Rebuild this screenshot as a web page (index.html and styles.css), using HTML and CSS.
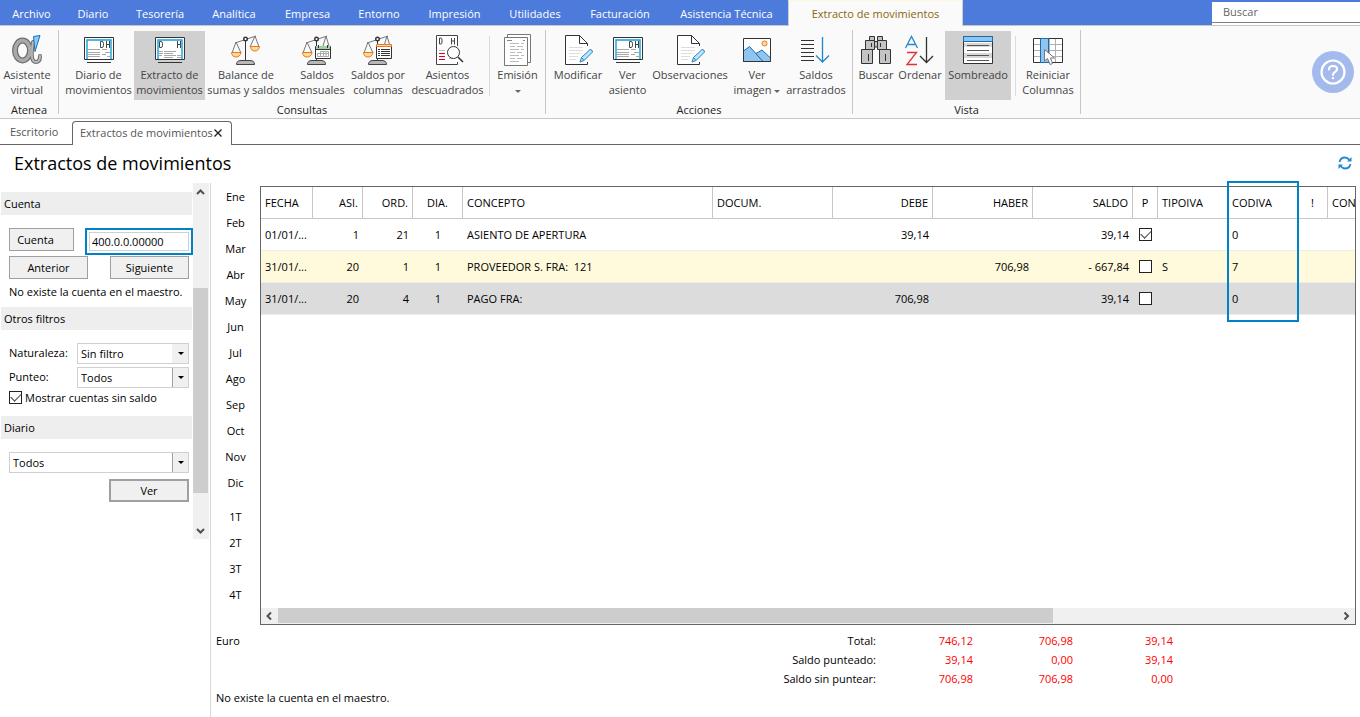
FILE: index.html
```html
<!DOCTYPE html>
<html lang="es">
<head>
<meta charset="utf-8">
<title>Extractos de movimientos</title>
<link rel="stylesheet" href="styles.css">
</head>
<body>
<svg class="defs" aria-hidden="true">
  <defs>
    <symbol id="i-alpha" viewBox="0 0 32 32">
      <g fill="none" stroke-linecap="round">
        <path d="M22 8C20 20 20 28 25 28C28 28 29 25 29 22" stroke="#6d6d6d" stroke-width="4"/>
        <ellipse cx="11.500" cy="16.500" rx="7.500" ry="10" stroke="#6d6d6d" stroke-width="6"/>
        <path d="M22 8C20 20 20 28 25 28C28 28 29 25 29 22" stroke="#b9b9b9" stroke-width="2"/>
        <ellipse cx="11.500" cy="16.500" rx="7.500" ry="10" stroke="#aaa" stroke-width="3.500"/>
      </g>
      <path d="M22.500 2.500L29 1.500L24 17.500Z" fill="#8fc8f2" stroke="#1c6fb3"/>
    </symbol>
    <symbol id="i-screen" viewBox="0 0 32 32">
      <path d="M1.500 3.500H30.500V25.500H1.500Z" fill="#fff" stroke="#333"/>
      <path d="M4 25V6H28V25" fill="none" stroke="#14a0d8" stroke-width="1.400"/>
      <path d="M4 28.500H28" stroke="#333"/>
      <path d="M5 15.500H17M19 15.500H24M5 18.500H17M22 18.500H27M5 20.500H17M19 20.500H23M5 22.500H17M24 22.500H27" stroke="#a8a8a8"/>
    </symbol>
    <symbol id="i-diario" viewBox="0 0 32 32">
      <use href="#i-screen"/>
      <path d="M17.500 7.500V13.500H19Q20.500 13.500 20.500 11.500V9.500Q20.500 7.500 19 7.500ZM23.500 7V14M26.500 7V14M23.500 10.500H26.500" fill="none" stroke="#444"/>
    </symbol>
    <symbol id="i-extracto" viewBox="0 0 32 32">
      <path d="M1.500 3.500H30.500V25.500H1.500Z" fill="#fff" stroke="#333"/>
      <path d="M4 25V6H28V25" fill="none" stroke="#14a0d8" stroke-width="1.400"/>
      <path d="M4 28.500H28" stroke="#333"/>
      <path d="M5.500 7.500V13.500H7Q8.500 13.500 8.500 11.500V9.500Q8.500 7.500 7 7.500ZM23.500 7V14M26.500 7V14M23.500 10.500H26.500" fill="none" stroke="#444"/>
      <path d="M5 17.500H9M10 17.500H22M5 19.500H9M10 19.500H19M5 21.500H8M10 21.500H22M23 21.500H27M10 23.500H19M23 23.500H27" stroke="#a8a8a8"/>
    </symbol>
    <symbol id="i-scale" viewBox="0 0 32 32">
      <path d="M15.500 5V28" stroke="#333"/>
      <path d="M5 9L26 2M6 8L2 19M6 8L11 19M25 2L20 13M25 2L29 13" fill="none" stroke="#777"/>
      <circle cx="15.500" cy="5" r="1.800" fill="#fff" stroke="#333" stroke-width="1.400"/>
      <path d="M1.500 18.500H11Q10 23 6 23Q2 23 1.500 18.500ZM20.500 12.500H29.500Q28.500 17 25 17Q21 17 20.500 12.500Z" fill="#fddd8c" stroke="#e8762c"/>
      <path d="M6.500 30.500Q6.500 26.500 11 26.500H20Q24.500 26.500 24.500 30.500Z" fill="#b8b8b8" stroke="#444"/>
    </symbol>
    <symbol id="i-scale-left" viewBox="0 0 32 32">
      <path d="M15.500 5V28" stroke="#333"/>
      <path d="M5 9L26 2M6 8L2 19M6 8L11 19M25 2L22 12M25 2L28 12" fill="none" stroke="#777"/>
      <circle cx="15.500" cy="5" r="1.800" fill="#fff" stroke="#333" stroke-width="1.400"/>
      <path d="M1.500 18.500H11Q10 23 6 23Q2 23 1.500 18.500Z" fill="#fddd8c" stroke="#e8762c"/>
      <path d="M6.500 30.500Q6.500 26.500 11 26.500H20Q24.500 26.500 24.500 30.500Z" fill="#b8b8b8" stroke="#444"/>
    </symbol>
    <symbol id="i-mensual" viewBox="0 0 32 32">
      <use href="#i-scale-left"/>
      <path d="M14.500 12.500H29.500V24.500H14.500Z" fill="#fff" stroke="#333"/>
      <path d="M15 12H29V15H15Z" fill="#9fd09f"/>
      <path d="M14 15.500H30M17.500 11V14M26.500 11V14" stroke="#333"/>
      <path d="M19 17.500H27.500V22.500H16.500V19.500H27M19.500 17V23M22.500 17V23M25 17V23" fill="none" stroke="#aaa"/>
    </symbol>
    <symbol id="i-columnas" viewBox="0 0 32 32">
      <use href="#i-scale-left"/>
      <path d="M14.500 11.500H29.500V24.500H14.500Z" fill="#fff" stroke="#333"/>
      <path d="M14.500 10.500H29.500V12.500H14.500Z" fill="#fddd8c" stroke="#e8762c"/>
      <path d="M16 15.500H18M19 15.500H28M16 17.500H18M19 17.500H28M16 19.500H18M19 19.500H28M16 21.500H18M19 21.500H28" stroke="#333"/>
    </symbol>
    <symbol id="i-descuadre" viewBox="0 0 32 32">
      <path d="M25.500 12V1.500H4.500V30.500H25.500V28" fill="#fff" stroke="#444"/>
      <path d="M7.500 4V10H9Q10 10 10 8V6Q10 4 9 4ZM19.500 4V10.500M22.500 4V10.500M19.500 7H22.500" fill="none" stroke="#444"/>
      <path d="M7 16.500H13M17 24.500H21" stroke="#bbb"/>
      <path d="M7 19.500H13M7 22.500H13M7 25.500H13" stroke="#d8001c"/>
      <circle cx="21.500" cy="18.500" r="6" fill="#fff" stroke="#333"/>
      <path d="M26 23L31 28" stroke="#333" stroke-width="1.500"/>
    </symbol>
    <symbol id="i-emision" viewBox="0 0 32 32">
      <path d="M5.500 .5H28.500V28.500H5.500Z" fill="#fff" stroke="#777"/>
      <path d="M2.500 3.500H25.500V31.500H2.500Z" fill="#fff" stroke="#777"/>
      <path d="M5 6.500H10M21 6.500H23" stroke="#888"/>
      <path d="M8 9.500H17M19 9.500H22M8 12.500H13M15 12.500H21M8 15.500H17M19 15.500H22M8 18.500H13M15 18.500H20M8 21.500H17M19 21.500H22M8 24.500H13M15 24.500H20M8 27.500H17" stroke="#bbb"/>
    </symbol>
    <symbol id="i-editar" viewBox="0 0 32 32">
      <path d="M25.500 12V9.500L17.500 1.500H3.500V30.500H25.500V28M17.500 1.500V9.500H25.500" fill="#fff" stroke="#333"/>
      <path d="M7 13.500H21M7 16.500H21M7 19.500H18M7 22.500H16M7 25.500H14" stroke="#ddd"/>
      <path d="M18 28L19.500 23.500L28 15.500Q30.500 15.500 30.500 18L22 26.500ZM19.500 23.500L22 26.500" fill="#bfe2fa" stroke="#1f87c9"/>
    </symbol>
    <symbol id="i-imagen" viewBox="0 0 32 32">
      <path d="M2.500 4.500H29.500V27.500H2.500Z" fill="#fff"/>
      <path d="M14 20L21 16L29.500 24V27.500H19Z" fill="#8fc5ef" stroke="#1a6cb0"/>
      <path d="M2.500 17L8.500 12.500L22 27.500H2.500Z" fill="#8fc5ef" stroke="#1a6cb0"/>
      <path d="M2.500 4.500H29.500V27.500H2.500Z" fill="none" stroke="#333"/>
      <circle cx="23.500" cy="9.500" r="2.500" fill="#fddd8c" stroke="#e8762c"/>
    </symbol>
    <symbol id="i-arrastre" viewBox="0 0 32 32">
      <path d="M1 6.500H14M1 10.500H14M1 14.500H14M1 18.500H14M1 22.500H14M1 26.500H14" stroke="#333"/>
      <path d="M22.500 3V28M16 21.500L22.500 28L29 21.500" fill="none" stroke="#1f87c9" stroke-width="1.300"/>
    </symbol>
    <symbol id="i-buscar" viewBox="0 0 32 32">
      <g fill="#c4c4c4" stroke="#333">
        <path d="M9.500 2.500H14.500V6.500H9.500ZM17.500 2.500H22.500V6.500H17.500ZM14.500 7.500H17.500V13H14.500Z"/>
        <path d="M5.500 6.500H14.500V15.500H5.500ZM17.500 6.500H26.500V15.500H17.500Z"/>
        <path d="M1.500 15.500H12.500V29.500H1.500ZM19.500 15.500H30.500V29.500H19.500Z"/>
        <path d="M11.500 9V13M20.500 9V13M8.500 20V27M25.500 20V27" fill="none"/>
      </g>
    </symbol>
    <symbol id="i-ordenar" viewBox="0 0 32 32">
      <path d="M1.500 14L7.500 2.500L13.500 14M3.500 10.500H11.500" fill="none" stroke="#2688cc" stroke-width="1.300"/>
      <path d="M3 18.500H12.500L3 30.500H13" fill="none" stroke="#e03030" stroke-width="1.300"/>
      <path d="M22.500 3V28M16 22L22.500 28.500L29 22" fill="none" stroke="#333" stroke-width="1.300"/>
    </symbol>
    <symbol id="i-sombreado" viewBox="0 0 32 32">
      <path d="M1.500 2.500H30.500V29.500H1.500Z" fill="#fff" stroke="#333"/>
      <path d="M2 9H30V13H2ZM2 19H30V24H2Z" fill="#d8d8d8"/>
      <path d="M1.500 2.500H30.500V7.500H1.500Z" fill="#8fc5ef" stroke="#1a6cb0"/>
      <path d="M5 11.500H27M5 16.500H27M5 21.500H27M5 26.500H27" stroke="#555"/>
    </symbol>
    <symbol id="i-reiniciar" viewBox="0 0 32 32">
      <path d="M1.500 4.500H30.500V28.500H1.500Z" fill="#fff" stroke="#333"/>
      <path d="M2 10.500H30M2 16.500H30M2 22.500H30M17.500 5V28M23.500 5V28" stroke="#b0b0b0"/>
      <path d="M8.500 4.500H16.500V28.500H8.500Z" fill="#8fc5ef" stroke="#1a6cb0"/>
      <path d="M12.500 15.500V27L15.500 24.500L18 30.500L20.500 29.500L18.500 24H22.500Z" fill="#fff" stroke="#777"/>
    </symbol>
  </defs>
</svg>

<nav class="menu">
  <div class="menu-items">
    <a class="menu-item" href="#">Archivo</a>
    <a class="menu-item" href="#">Diario</a>
    <a class="menu-item" href="#">Tesorería</a>
    <a class="menu-item" href="#">Analítica</a>
    <a class="menu-item" href="#">Empresa</a>
    <a class="menu-item" href="#">Entorno</a>
    <a class="menu-item" href="#">Impresión</a>
    <a class="menu-item" href="#">Utilidades</a>
    <a class="menu-item" href="#">Facturación</a>
    <a class="menu-item" href="#">Asistencia Técnica</a>
    <a class="menu-item menu-item-active" href="#">Extracto de movimientos</a>
  </div>
  <div class="search"><input class="search-input" type="text" placeholder="Buscar" aria-label="Buscar"></div>
</nav>

<div class="ribbon">
  <section class="group">
    <div class="tools tools-atenea">
      <button class="tool"><svg class="icon"><use href="#i-alpha"/></svg><span class="tool-name">Asistente<br>virtual</span></button>
    </div>
    <div class="group-name">Atenea</div>
  </section>
  <section class="group">
    <div class="tools tools-consultas">
      <button class="tool"><svg class="icon"><use href="#i-diario"/></svg><span class="tool-name">Diario de<br>movimientos</span></button>
      <button class="tool tool-on"><svg class="icon"><use href="#i-extracto"/></svg><span class="tool-name">Extracto de<br>movimientos</span></button>
      <button class="tool"><svg class="icon"><use href="#i-scale"/></svg><span class="tool-name">Balance de<br>sumas y saldos</span></button>
      <button class="tool"><svg class="icon"><use href="#i-mensual"/></svg><span class="tool-name">Saldos<br>mensuales</span></button>
      <button class="tool"><svg class="icon"><use href="#i-columnas"/></svg><span class="tool-name">Saldos por<br>columnas</span></button>
      <button class="tool"><svg class="icon"><use href="#i-descuadre"/></svg><span class="tool-name">Asientos<br>descuadrados</span></button>
      <span class="divider"></span>
      <button class="tool"><svg class="icon"><use href="#i-emision"/></svg><span class="tool-name">Emisión<br><span class="caret"></span></span></button>
    </div>
    <div class="group-name">Consultas</div>
  </section>
  <section class="group">
    <div class="tools tools-acciones">
      <button class="tool"><svg class="icon"><use href="#i-editar"/></svg><span class="tool-name">Modificar</span></button>
      <button class="tool"><svg class="icon"><use href="#i-diario"/></svg><span class="tool-name">Ver<br>asiento</span></button>
      <button class="tool"><svg class="icon"><use href="#i-editar"/></svg><span class="tool-name">Observaciones</span></button>
      <button class="tool"><svg class="icon"><use href="#i-imagen"/></svg><span class="tool-name">Ver<br>imagen <span class="caret"></span></span></button>
      <button class="tool"><svg class="icon"><use href="#i-arrastre"/></svg><span class="tool-name">Saldos<br>arrastrados</span></button>
    </div>
    <div class="group-name">Acciones</div>
  </section>
  <section class="group">
    <div class="tools tools-vista">
      <button class="tool"><svg class="icon"><use href="#i-buscar"/></svg><span class="tool-name">Buscar</span></button>
      <button class="tool"><svg class="icon"><use href="#i-ordenar"/></svg><span class="tool-name">Ordenar</span></button>
      <button class="tool tool-on"><svg class="icon"><use href="#i-sombreado"/></svg><span class="tool-name">Sombreado</span></button>
      <span class="divider"></span>
      <button class="tool"><svg class="icon"><use href="#i-reiniciar"/></svg><span class="tool-name">Reiniciar<br>Columnas</span></button>
    </div>
    <div class="group-name">Vista</div>
  </section>
  <button class="help" aria-label="Ayuda">
    <svg viewBox="0 0 42 42" fill="none" stroke="#fff" stroke-width="2.200">
      <circle cx="21" cy="21" r="11.500"/>
      <path d="M17 18.500Q17 15 21 15Q25 15 25 18Q25 20 23 21Q21 22 21 24" stroke-linecap="round"/>
      <path d="M21 26V28.200"/>
    </svg>
  </button>
</div>

<div class="tabs">
  <a class="tab" href="#">Escritorio</a>
  <div class="tab tab-active">Extractos de movimientos
    <button class="tab-close" aria-label="Cerrar"><svg viewBox="0 0 8 8" stroke="#222" stroke-width="1.400"><path d="M.5 .5L7.500 7.500M7.500 .5L.5 7.500"/></svg></button>
  </div>
</div>

<header class="title-row">
  <h1 class="title">Extractos de movimientos</h1>
  <button class="refresh" aria-label="Actualizar">
    <svg viewBox="0 0 14 14"><path d="M1.500 6Q2.500 1.500 7 1.500Q9.500 1.500 11.500 4M12.500 8Q11.500 12.500 7 12.500Q4.500 12.500 2.500 10" fill="none" stroke="#2688cc" stroke-width="1.800"/><path d="M13.500 1V5.500H9ZM.5 13V8.500H5Z" fill="#2688cc"/></svg>
  </button>
</header>

<main class="work">
  <aside class="side">
    <form class="filters">
      <h2 class="bar">Cuenta</h2>
      <div class="block">
        <div class="line">
          <button class="btn btn-account" type="button">Cuenta</button>
          <span class="mark"><input class="account" type="text" value="400.0.0.00000" aria-label="Cuenta"></span>
        </div>
        <div class="line line-nav">
          <button class="btn btn-nav" type="button">Anterior</button>
          <button class="btn btn-nav" type="button">Siguiente</button>
        </div>
        <p class="note">No existe la cuenta en el maestro.</p>
      </div>
      <h2 class="bar">Otros filtros</h2>
      <div class="block">
        <div class="field"><label for="nat">Naturaleza:</label><span class="pick"><select id="nat"><option>Sin filtro</option></select></span></div>
        <div class="field"><label for="pun">Punteo:</label><span class="pick pick-split"><select id="pun"><option>Todos</option></select></span></div>
        <label class="check-label"><input class="check" type="checkbox" checked>Mostrar cuentas sin saldo</label>
      </div>
      <h2 class="bar">Diario</h2>
      <div class="block">
        <span class="pick pick-split"><select aria-label="Diario"><option>Todos</option></select></span>
        <button class="btn btn-go" type="button">Ver</button>
      </div>
    </form>
    <div class="vscroll">
      <svg class="arrow" viewBox="0 0 16 16"><path d="M4 11L7.500 7.500L11 11"/></svg>
      <div class="vtrack"><div class="vthumb"></div></div>
      <svg class="arrow" viewBox="0 0 16 16"><path d="M4 6L7.500 9.500L11 6"/></svg>
    </div>
  </aside>

  <section class="content">
    <div class="upper">
      <div class="periods">
        <a href="#">Ene</a><a href="#">Feb</a><a href="#">Mar</a><a href="#">Abr</a><a href="#">May</a><a href="#">Jun</a>
        <a href="#">Jul</a><a href="#">Ago</a><a href="#">Sep</a><a href="#">Oct</a><a href="#">Nov</a><a href="#">Dic</a>
        <a class="quarter" href="#">1T</a><a href="#">2T</a><a href="#">3T</a><a href="#">4T</a>
      </div>
      <div class="grid">
        <div class="grid-body">
          <table class="ledger">
            <colgroup>
              <col class="c-fecha"><col class="c-num"><col class="c-num"><col class="c-num"><col class="c-concepto"><col class="c-docum"><col class="c-money"><col class="c-money"><col class="c-money"><col class="c-check"><col class="c-iva"><col class="c-iva"><col class="c-flag"><col class="c-money">
            </colgroup>
            <thead>
              <tr><th>FECHA</th><th class="right">ASI.</th><th class="right">ORD.</th><th class="mid">DIA.</th><th>CONCEPTO</th><th>DOCUM.</th><th class="right">DEBE</th><th class="right">HABER</th><th class="right">SALDO</th><th class="mid">P</th><th class="open">TIPOIVA</th><th class="open">CODIVA</th><th class="mid">!</th><th>CON</th></tr>
            </thead>
            <tbody>
              <tr><td>01/01/...</td><td class="right">1</td><td class="right">21</td><td class="mid">1</td><td>ASIENTO DE APERTURA</td><td></td><td class="right">39,14</td><td></td><td class="right">39,14</td><td class="mid"><input class="check" type="checkbox" checked aria-label="Punteado"></td><td></td><td>0</td><td></td><td></td></tr>
              <tr class="row-alt"><td>31/01/...</td><td class="right">20</td><td class="right">1</td><td class="mid">1</td><td>PROVEEDOR S. FRA:&nbsp; 121</td><td></td><td></td><td class="right">706,98</td><td class="right">- 667,84</td><td class="mid"><input class="check" type="checkbox" aria-label="Punteado"></td><td>S</td><td>7</td><td></td><td></td></tr>
              <tr class="row-sel"><td>31/01/...</td><td class="right">20</td><td class="right">4</td><td class="mid">1</td><td>PAGO FRA:</td><td></td><td class="right">706,98</td><td></td><td class="right">39,14</td><td class="mid"><input class="check" type="checkbox" aria-label="Punteado"></td><td></td><td>0</td><td></td><td></td></tr>
            </tbody>
          </table>
        </div>
        <div class="hscroll">
          <svg class="arrow" viewBox="0 0 16 16"><path d="M10 4.500L6.500 8L10 11.500"/></svg>
          <div class="htrack"><div class="hthumb"></div></div>
          <svg class="arrow" viewBox="0 0 16 16"><path d="M5.500 4.500L9 8L5.500 11.500"/></svg>
        </div>
        <div class="highlight"></div>
      </div>
    </div>
    <footer class="summary">
      <div class="summary-top">
        <span>Euro</span>
        <table class="totals">
          <tr><th>Total:</th><td>746,12</td><td>706,98</td><td>39,14</td></tr>
          <tr><th>Saldo punteado:</th><td>39,14</td><td>0,00</td><td>39,14</td></tr>
          <tr><th>Saldo sin puntear:</th><td>706,98</td><td>706,98</td><td>0,00</td></tr>
        </table>
      </div>
      <div>No existe la cuenta en el maestro.</div>
    </footer>
  </section>
</main>
</body>
</html>
```

FILE: styles.css
```css
* { box-sizing: border-box; }

body {
  margin: 0;
  min-height: 100vh;
  display: flex;
  flex-direction: column;
  background: #fff;
  color: #000;
  font: 11px/19px "Open Sans", "Noto Sans", sans-serif;
}

button, input, select { font: inherit; color: inherit; margin: 0; }
button { padding: 0; border: 0; background: none; cursor: pointer; }
a { color: inherit; text-decoration: none; }
.defs { display: none; }

/* Menu bar */
.menu {
  display: flex;
  justify-content: space-between;
  height: 26px;
  background: #4c7bdb;
  border-bottom: 1px solid #c6c6c6;
}
.menu-items {
  display: grid;
  grid-template-columns: 63px 60px 74px 74px 73px 70px 81px 80px 90px 123px 175px;
}
.menu-item {
  color: #fff;
  text-align: center;
  line-height: 27px;
  height: 25px;
}
.menu-item-active {
  height: 26px;
  line-height: 25px;
  background: #fafafa;
  color: #8a660c;
  border: 1px solid #d0d0c8;
  border-top-color: #fdf8dc;
  border-bottom: 0;
}
.search {
  width: 148px;
  padding-top: 2px;
}
.search-input {
  display: block;
  width: 100%;
  height: 21px;
  padding: 0 0 2px 11px;
  border: 0;
  border-bottom: 1px solid #808080;
  outline: 0;
  background: #fff;
}
.search::after {
  content: "";
  display: block;
  height: 2px;
  background: #fff;
}
.search-input::placeholder { color: #666; }

/* Ribbon */
.ribbon {
  display: flex;
  height: 93px;
  padding: 4px 0;
  background: #fafafa;
  border-bottom: 1px solid #c6c6c6;
}
.group { border-right: 1px solid #c6c6c6; }
.tools {
  display: grid;
  height: 70px;
  padding: 1px 3px 0 4px;
}
.tools-atenea { grid-template-columns: 54px; padding-left: 0; padding-right: 4px; }
.tools-consultas { grid-template-columns: 71px 71px 82px 60px 62px 77px 7px 49px; }
.tools-acciones { grid-template-columns: 56px 43px 82px 52px 66px; }
.tools-vista { grid-template-columns: 38px 50px 66px 8px 58px; }
.tool {
  height: 69px;
  color: #444;
  line-height: 15px;
  text-align: center;
  white-space: nowrap;
}
.tool-on { background: #d0d0d0; }
.icon {
  display: block;
  width: 32px;
  height: 32px;
  margin: 0 auto 1px;
}
.tool-name {
  display: block;
  height: 30px;
}
.caret {
  display: inline-block;
  border: 3px solid transparent;
  border-top-color: #666;
  border-bottom-width: 0;
  vertical-align: middle;
}
.divider {
  width: 1px;
  height: 60px;
  margin: 5px auto 0;
  background: #dcdcdc;
}
.group-name {
  height: 15px;
  line-height: 20px;
  color: #222;
  text-align: center;
}
.help {
  align-self: center;
  width: 42px;
  height: 42px;
  margin: 0 6px 0 auto;
  border-radius: 50%;
  background: #a5baec;
}
.help svg { display: block; }

/* Document tabs */
.tabs {
  display: flex;
  height: 26px;
  padding-top: 2px;
  border-bottom: 1px solid #666;
}
.tab {
  width: 72px;
  padding-left: 10px;
  line-height: 22px;
  color: #555;
}
.tab-active {
  display: flex;
  align-items: center;
  justify-content: space-between;
  width: 160px;
  height: 24px;
  padding: 0 9px 2px 7px;
  border: 1px solid #666;
  border-bottom: 0;
  border-radius: 4px 4px 0 0;
  background: #fff;
  white-space: nowrap;
}
.tab-close { width: 8px; height: 8px; }
.tab-close svg, .refresh svg { display: block; }

.title-row {
  display: flex;
  align-items: center;
  justify-content: space-between;
  height: 38px;
  padding: 0 8px 3px 14px;
}
.title {
  margin: 0;
  font-size: 18px;
  line-height: 24px;
  font-weight: 400;
}
.refresh { width: 14px; height: 14px; }

/* Filters */
.work {
  flex: 1;
  display: flex;
}
.side {
  display: flex;
  align-items: flex-start;
  width: 211px;
  border-right: 1px solid #d8d8d8;
}
.filters {
  width: 192px;
  margin-right: 1px;
  padding-top: 9px;
}
.bar {
  margin: 0 0 0 1px;
  padding-left: 3px;
  font-size: 11px;
  font-weight: 400;
  line-height: 23px;
  background: #eee;
}
.block { padding: 13px 3px 5px 9px; }
.line { display: flex; justify-content: space-between; align-items: flex-start; margin-right: -4px; }
.line-nav { margin-right: 0; margin-top: 1px; }
.btn {
  height: 23px;
  border: 1px solid #a0a0a0;
  background: #f0f0f0;
  line-height: 21px;
}
.btn-account { width: 65px; padding-right: 12px; }
.btn-nav { width: 79px; }
.mark {
  width: 108px;
  height: 27px;
  padding: 2px;
  border: 2px solid #0082c8;
}
.account {
  display: block;
  width: 100%;
  height: 19px;
  padding: 0 2px 1px;
  border: 1px solid #d0d0d0;
  outline: 0;
  background: #fff;
}
.note { margin: 3px 0 1px; white-space: nowrap; }
.field {
  display: grid;
  grid-template-columns: 68px 1fr;
  margin-bottom: 3px;
}
.pick {
  position: relative;
  display: block;
}
.pick select {
  display: block;
  width: 100%;
  height: 21px;
  padding: 0 20px 0 3px;
  border: 1px solid #d0d0d0;
  border-radius: 0;
  outline: 0;
  appearance: none;
  background: linear-gradient(#f0f0f0, #f0f0f0) right / 16px 100% no-repeat #fff;
}
.pick::after {
  content: "";
  position: absolute;
  right: 5px;
  top: 9px;
  border: 3px solid transparent;
  border-top-color: #000;
  border-bottom: 0;
  pointer-events: none;
}
.pick-split::before {
  content: "";
  position: absolute;
  right: 16px;
  top: 1px;
  bottom: 1px;
  width: 1px;
  background: #a0a0a0;
}
.check-label {
  display: flex;
  align-items: center;
  gap: 3px;
  height: 13px;
  margin-bottom: 7px;
  white-space: nowrap;
}
.check {
  display: grid;
  place-items: center;
  width: 13px;
  height: 13px;
  border: 1px solid #222;
  appearance: none;
  background: #fff;
}
.check:checked::after {
  content: "";
  width: 9px;
  height: 5px;
  margin-bottom: 3px;
  border: solid #444;
  border-width: 0 0 1px 1px;
  transform: rotate(-45deg);
}
.btn-go {
  display: block;
  width: 80px;
  margin: 6px 0 0 auto;
  border-width: 2px;
  line-height: 19px;
}

/* Scroll bars */
.arrow {
  flex: none;
  display: block;
  width: 16px;
  height: 16px;
  fill: none;
  stroke: #505050;
  stroke-width: 2;
}
.vscroll {
  display: flex;
  flex-direction: column;
  width: 16px;
  height: 356px;
  background: #f0f0f0;
}
.vtrack { flex: 1; padding-top: 89px; }
.vthumb { width: 15px; height: 205px; background: #cdcdcd; }
.hscroll { display: flex; height: 16px; background: #f0f0f0; }
.htrack { flex: 1; padding-left: 1px; }
.hthumb { width: 73%; height: 15px; background: #cdcdcd; }

/* Ledger */
.content {
  flex: 1;
  min-width: 0;
  display: flex;
  flex-direction: column;
}
.upper { display: flex; flex: 1; }
.periods {
  display: flex;
  flex-direction: column;
  width: 49px;
  padding-top: 1px;
  text-align: center;
  line-height: 26px;
}
.quarter { margin-top: 8px; }
.grid {
  position: relative;
  flex: 1;
  min-width: 0;
  display: flex;
  flex-direction: column;
  margin: 3px 4px 0 0;
  border: 1px solid #666;
}
.grid-body { flex: 1; overflow: hidden; }
.ledger {
  width: 1166px;
  table-layout: fixed;
  border-collapse: separate;
  border-spacing: 0;
}
.c-fecha { width: 52px; }
.c-num { width: 50px; }
.c-concepto { width: 250px; }
.c-docum { width: 120px; }
.c-money { width: 100px; }
.c-check { width: 25px; }
.c-iva { width: 70px; }
.c-flag { width: 30px; }
.ledger th, .ledger td {
  height: 32px;
  padding: 0 4px;
  font-weight: 400;
  text-align: left;
  white-space: nowrap;
  border-bottom: 1px solid #ececec;
}
.ledger th { border-bottom-color: #c6c6c6; border-right: 1px solid #c6c6c6; }
.ledger th.open { border-right-color: transparent; }
.ledger .right { text-align: right; }
.ledger .mid { text-align: center; }
.ledger .mid .check { margin: 0 auto; }
.row-alt { background: #fffadc; }
.row-sel { background: #dcdcdc; }
.highlight {
  position: absolute;
  left: 966px;
  top: -6px;
  width: 72px;
  height: 141px;
  border: 2px solid #0082c8;
}

/* Totals */
.summary { padding: 6px 5px 10px; }
.summary-top { display: flex; }
.summary-top > span { width: 525px; }
.totals { border-collapse: collapse; }
.totals th, .totals td {
  width: 100px;
  padding: 0;
  font-weight: 400;
  text-align: right;
}
.totals th { width: 135px; }
.totals td { color: #f00; }
.totals th + td { width: 97px; }
```
